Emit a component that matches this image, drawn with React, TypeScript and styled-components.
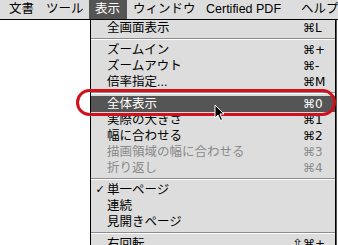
import * as React from 'react';
import styled, { createGlobalStyle } from 'styled-components';

interface MenuEntry {
  label?: string;
  shortcut?: string;
  shift?: boolean;
  checked?: boolean;
  disabled?: boolean;
  active?: boolean;
  separator?: boolean;
}

interface BarEntry {
  label: string;
  width: number;
}

// widths follow the spacing of the original menu bar
const barItems: BarEntry[] = [
  { label: '文書', width: 37 },
  { label: 'ツール', width: 49 },
  { label: '表示', width: 38 },
  { label: 'ウィンドウ', width: 73 },
  { label: 'Certified PDF', width: 95 },
  { label: 'ヘルプ', width: 50 },
];

const entries: MenuEntry[] = [
  { label: '全画面表示', shortcut: 'L' },
  { separator: true },
  { label: 'ズームイン', shortcut: '+' },
  { label: 'ズームアウト', shortcut: '-' },
  { label: '倍率指定...', shortcut: 'M' },
  { separator: true },
  { label: '全体表示', shortcut: '0', active: true },
  { label: '実際の大きさ', shortcut: '1' },
  { label: '幅に合わせる', shortcut: '2' },
  { label: '描画領域の幅に合わせる', shortcut: '3', disabled: true },
  { label: '折り返し', shortcut: '4', disabled: true },
  { separator: true },
  { label: '単一ページ', checked: true },
  { label: '連続' },
  { label: '見開きページ' },
  { separator: true },
  { label: '右回転', shortcut: '+', shift: true },
];

const App: React.FC = () => {
  return (
    <Screen>
      <GlobalStyle />
      <MenuBar>
        {barItems.map(item => (
          <BarItem key={item.label} width={item.width} open={item.label === '表示'}>
            {item.label}
          </BarItem>
        ))}
      </MenuBar>

      <Dropdown>
        {entries.map((entry, i) =>
          entry.separator ? (
            <Separator key={i} />
          ) : (
            <Item key={i} active={!!entry.active} disabled={!!entry.disabled}>
              <Check>{entry.checked ? '✓' : ''}</Check>
              <Label>{entry.label}</Label>
              <Modifier>{entry.shift ? '⇧' : ''}</Modifier>
              <Shortcut>{entry.shortcut ? `⌘${entry.shortcut}` : ''}</Shortcut>
            </Item>
          )
        )}
      </Dropdown>

      <Marker />

      <Pointer width="12" height="18" viewBox="0 0 12 18">
        <path d="M1 1 L1 14 L4 11 L6.5 16.5 L8.5 15.5 L6 10 L10 10 Z" fill="#000" stroke="#fff" strokeWidth="1" />
      </Pointer>
    </Screen>
  );
};

export default App;

const GlobalStyle = createGlobalStyle`
  html, body {
    margin: 0;
    padding: 0;
    background: #ffffff;
  }
`;

const Screen = styled.div`
  position: relative;
  width: 338px;
  height: 245px;
  overflow: hidden;
  background: #ffffff;
  font-family: 'Liberation Sans', 'Noto Sans CJK JP', sans-serif;
  font-size: 12px;
  color: #000000;
`;

const MenuBar = styled.div`
  display: flex;
  align-items: stretch;
  height: 19px;
  padding-left: 3px;
  background: #dddddd;
  border-bottom: 1px solid #000000;
  white-space: nowrap;
`;

const BarItem = styled.div<{ open: boolean; width: number }>`
  flex: none;
  width: ${props => props.width}px;
  box-sizing: border-box;
  padding-left: 6px;
  line-height: 19px;
  font-size: 12.5px;
  color: ${props => (props.open ? '#ffffff' : '#000000')};
  background: ${props => (props.open ? '#555555' : 'transparent')};
`;

const Dropdown = styled.div`
  position: absolute;
  left: 90px;
  top: 20px;
  width: 244px;
  padding-bottom: 20px;
  background: #dddddd;
  border-left: 1px solid #000000;
  border-right: 1px solid #000000;
  box-shadow: 1px 0 0 #555555;
`;

const Item = styled.div<{ active: boolean; disabled: boolean }>`
  display: grid;
  grid-template-columns: 16px 182px 14px 1fr;
  align-items: center;
  height: 16px;
  line-height: 16px;
  white-space: nowrap;
  background: ${props => (props.active ? '#555555' : 'transparent')};
  color: ${props => (props.active ? '#ffffff' : props.disabled ? '#8a8a8a' : '#000000')};
`;

const Check = styled.span`
  font-family: 'DejaVu Sans', sans-serif;
  font-size: 11px;
  font-weight: bold;
  text-align: center;
  padding-left: 2px;
`;

const Label = styled.span`
  font-size: 12.5px;
`;

const Modifier = styled.span`
  font-family: 'DejaVu Sans', sans-serif;
  font-size: 13px;
  text-align: right;
`;

const Shortcut = styled.span`
  font-family: 'DejaVu Sans', sans-serif;
  font-size: 12px;
`;

const Separator = styled.div`
  height: 6px;
  display: flex;
  flex-direction: column;
  justify-content: center;

  &::before {
    content: '';
    display: block;
    height: 1px;
    background: #8c8c8c;
  }

  &::after {
    content: '';
    display: block;
    height: 1px;
    background: #ffffff;
  }
`;

const Marker = styled.div`
  position: absolute;
  left: 76px;
  top: 89px;
  width: 254px;
  height: 21px;
  border: 3px solid #d0101a;
  border-radius: 14px;
`;

const Pointer = styled.svg`
  position: absolute;
  left: 214px;
  top: 104px;
`;
